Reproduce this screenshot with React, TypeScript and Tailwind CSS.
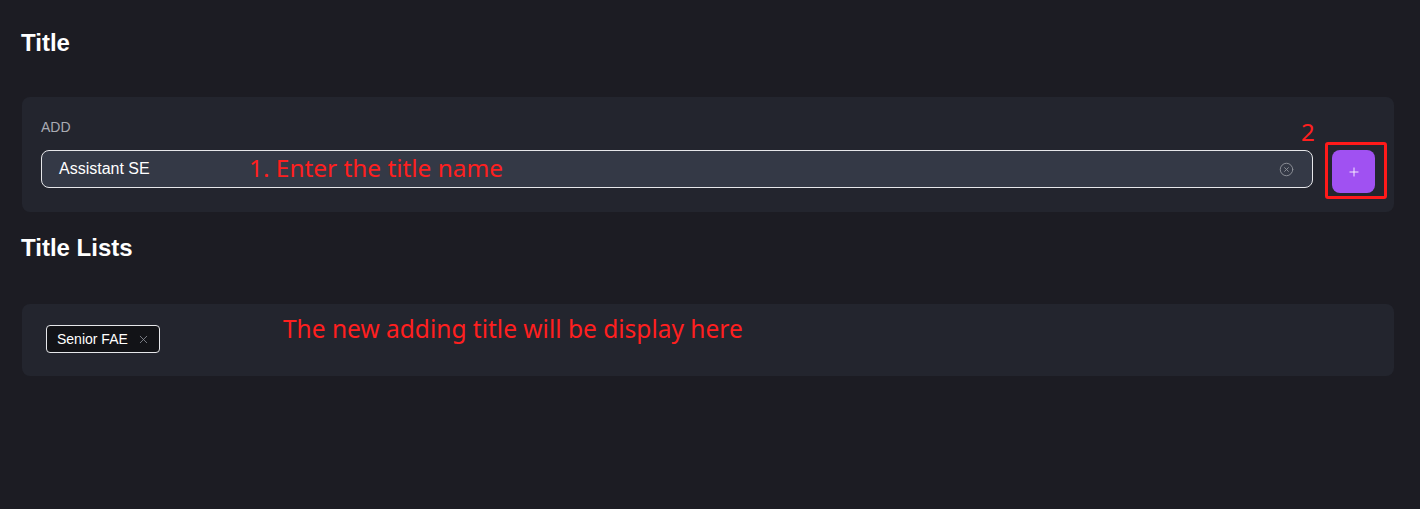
import { Plus, X, CircleX } from "lucide-react";

const annot = { fontFamily: '"Noto Sans", "Open Sans", sans-serif' };

export default function App() {
  return (
    <div
      className="min-h-[509px] w-full bg-[#1c1c23] pl-[22px] pr-[26px] pt-[26px] text-white"
      style={{ fontFamily: '"Liberation Sans", Arial, sans-serif' }}
    >
      {/* Title */}
      <h1 className="-ml-px h-[34px] text-[24px] font-bold leading-[34px]">Title</h1>

      <div className="relative mt-[37px] rounded-lg bg-[#23252e] px-[19px] pb-[19px] pt-[21px]">
        <p className="text-[14px] leading-[18px] text-[#a9abb3]">ADD</p>
        <div className="mt-[14px] flex items-start gap-[19px]">
          <div className="relative flex h-[38px] flex-1 items-center rounded-lg border border-[#e6e7ea] bg-[#343946] pl-[17px] pr-[18px]">
            <span className="flex-1 text-[16px] text-white">Assistant SE</span>
            <CircleX className="h-[15px] w-[15px] text-[#8e9199]" strokeWidth={1.5} />
            <span
              className="absolute left-[207px] top-[2px] text-[24.4px] leading-[30px] text-[#ff1f1f]"
              style={annot}
            >
              1. Enter the title name
            </span>
          </div>
          <div className="relative">
            <button className="flex h-[43px] w-[43px] items-center justify-center rounded-lg bg-[#a051f2] text-white">
              <Plus className="h-[14px] w-[14px]" strokeWidth={1.5} />
            </button>
            <div className="absolute -left-[7px] -top-[8px] h-[57px] w-[62px] rounded-[3px] border-[3px] border-[#ff1a1a]" />
            <span
              className="absolute -left-[31px] -top-[32px] text-[24px] leading-[28px] text-[#ff1f1f]"
              style={annot}
            >
              2
            </span>
          </div>
        </div>
      </div>

      {/* Title Lists */}
      <h2 className="-ml-px mt-[19px] h-[34px] text-[24px] font-bold leading-[34px]">Title Lists</h2>

      <div className="relative mt-[39px] h-[72px] rounded-lg bg-[#23252e] pl-[24px] pt-[21px]">
        <span className="inline-flex h-[28px] items-center gap-[9px] rounded-[4px] border border-[#e6e7ea] bg-[#121317] pl-[10px] pr-[9px] text-[14px] text-white">
          Senior FAE
          <X className="h-[13px] w-[13px] text-[#8e9199]" strokeWidth={1.5} />
        </span>
        <span
          className="absolute left-[261px] top-[10px] text-[24.5px] leading-[30px] text-[#ff1f1f]"
          style={annot}
        >
          The new adding title will be display here
        </span>
      </div>
    </div>
  );
}
